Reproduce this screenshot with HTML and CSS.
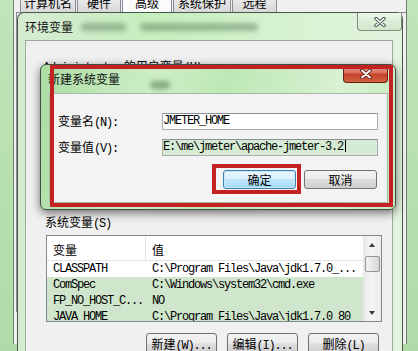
FILE: index.html
```html
<!DOCTYPE html>
<html lang="zh-CN">
<head>
    <meta charset="UTF-8">
    <meta name="viewport" content="width=device-width, initial-scale=1.0">
    <title>新建系统变量</title>
    <link rel="stylesheet" href="styles.css">
</head>
<body>
<div class="desk">

    <!-- Sistemska svojstva, u pozadini -->
    <div class="sys-window">
        <div class="sys-client">
            <div class="tabs">
                <span class="tab t1">计算机名</span>
                <span class="tab t2">硬件</span>
                <span class="tab t3 active">高级</span>
                <span class="tab t4">系统保护</span>
                <span class="tab t5">远程</span>
            </div>
            <div class="tab-panel"></div>
        </div>
    </div>

    <!-- Prozor: 环境变量 -->
    <div class="env-window">
        <div class="titlebar">
            <span class="title">环境变量</span>
            <span class="blob b1"></span>
            <span class="blob b2"></span>
            <span class="close">
                <svg width="12" height="10" viewBox="0 0 12 10">
                    <path d="M2 1.5 L10 8.5 M10 1.5 L2 8.5" stroke="#4a5a52" stroke-width="3.6" stroke-linecap="round"/>
                    <path d="M2 1.5 L10 8.5 M10 1.5 L2 8.5" stroke="#ffffff" stroke-width="1.6" stroke-linecap="round"/>
                </svg>
            </span>
        </div>
        <div class="env-client">
            <div class="group-label user-label"><span class="hw">Administrator</span> 的用户变量<span class="hw">(U)</span></div>
            <div class="user-list"></div>
            <div class="group-label">系统变量<span class="hw">(S)</span></div>

            <div class="list">
                <div class="list-body">
                    <div class="list-head">
                        <span class="col1">变量</span>
                        <span class="col2">值</span>
                    </div>
                    <div class="row">
                        <span class="col1 hw">CLASSPATH</span>
                        <span class="col2 hw">C:\Program Files\Java\jdk1.7.0_...</span>
                    </div>
                    <div class="row sel">
                        <span class="col1 hw">ComSpec</span>
                        <span class="col2 hw">C:\Windows\system32\cmd.exe</span>
                    </div>
                    <div class="row sel">
                        <span class="col1 hw">FP_NO_HOST_C...</span>
                        <span class="col2 hw">NO</span>
                    </div>
                    <div class="row sel">
                        <span class="col1 hw">JAVA_HOME</span>
                        <span class="col2 hw">C:\Program Files\Java\jdk1.7.0_80</span>
                    </div>
                </div>
                <div class="scrollbar">
                    <div class="sb-btn"><span class="arrow up"></span></div>
                    <div class="thumb"></div>
                    <div class="sb-track"></div>
                    <div class="sb-btn"><span class="arrow down"></span></div>
                </div>
            </div>

            <div class="env-buttons">
                <span class="btn wide">新建<span class="hw">(W)...</span></span>
                <span class="btn wide">编辑<span class="hw">(I)...</span></span>
                <span class="btn wide">删除<span class="hw">(L)</span></span>
            </div>
        </div>
    </div>

    <!-- Dijalog: 新建系统变量 -->
    <div class="dialog">
        <div class="titlebar dlg-titlebar">
            <span class="title">新建系统变量</span>
            <span class="blob b3"></span>
            <span class="close red">
                <svg width="12" height="10" viewBox="0 0 12 10">
                    <path d="M2 1.5 L10 8.5 M10 1.5 L2 8.5" stroke="#5a1a12" stroke-width="3.6" stroke-linecap="round"/>
                    <path d="M2 1.5 L10 8.5 M10 1.5 L2 8.5" stroke="#ffffff" stroke-width="1.8" stroke-linecap="round"/>
                </svg>
            </span>
        </div>
        <div class="dlg-client">
            <div class="field-row">
                <span class="field-label">变量名<span class="hw">(N):</span></span>
                <div class="field hw">JMETER_HOME</div>
            </div>
            <div class="field-row second">
                <span class="field-label">变量值<span class="hw">(V):</span></span>
                <div class="field active hw">E:\me\jmeter\apache-jmeter-3.2<span class="caret"></span></div>
            </div>
            <div class="dlg-buttons">
                <span class="btn default">确定</span>
                <span class="btn">取消</span>
            </div>
        </div>

        <!-- crvene oznake preko dijaloga -->
        <div class="mark mark-dialog"></div>
        <div class="mark mark-ok"></div>
    </div>

</div>
</body>
</html>
```

FILE: styles.css
```css
* {
    box-sizing: border-box;
}
body {
    margin: 0;
    width: 418px;
    height: 351px;
    overflow: hidden;
    font-family: "Noto Sans CJK SC", sans-serif;
    font-size: 12px;
    line-height: 14px;
    color: #000;
    background: linear-gradient(to bottom, #bfe5b8, #b0dba8);
}
.desk {
    position: relative;
    width: 418px;
    height: 351px;
    overflow: hidden;
}
.hw {
    font-family: "Liberation Mono", monospace;
    letter-spacing: -1.2px;
}

/* pozadinski prozor */
.sys-window {
    height: 100%;
    padding: 0 11px 0 13px;
}
.sys-client {
    height: 100%;
    background: #f0f0f0;
    border-left: 1px solid #6f7f70;
    border-right: 1px solid #6f7f70;
    padding-left: 2px;
}
.tabs {
    display: flex;
    margin-top: -7px;
    margin-left: 4px;
    height: 19px;
}
.tab {
    height: 19px;
    margin-right: 1px;
    border: 1px solid #898c95;
    border-bottom: none;
    background: linear-gradient(#f4f4f4, #e4e4e4 50%, #d8d8d8);
    text-align: center;
    line-height: 17px;
}
.tab.active {
    background: #fbfbfb;
    height: 20px;
}
.t1 { width: 56px; }
.t2 { width: 44px; }
.t3 { width: 50px; }
.t4 { width: 58px; }
.t5 { width: 45px; }
.tab-panel {
    height: 300px;
    border-top: 1px solid #898c95;
    border-left: 1px solid #898c95;
}

/* prozori */
.titlebar {
    display: flex;
    align-items: center;
    flex-shrink: 0;
}
.title {
    padding-left: 7px;
    color: #111;
}
.blob {
    display: block;
    height: 8px;
    border-radius: 4px;
    background: rgba(80, 115, 80, 0.45);
    filter: blur(2.5px);
}
.close {
    align-self: flex-start;
    display: flex;
    align-items: center;
    justify-content: center;
    width: 45px;
    height: 18px;
    margin-left: auto;
    border: 1px solid #7d8d80;
    border-top: none;
    border-radius: 0 0 4px 4px;
    background: linear-gradient(#eef8ec, #dcefd8 50%, #cfe8ca);
}

.env-window {
    position: absolute;
    left: 17px;
    top: 12px;
    width: 386px;
    height: 360px;
    display: flex;
    flex-direction: column;
    border: 1px solid #47574a;
    border-bottom: none;
    border-radius: 7px 7px 0 0;
    background: linear-gradient(to right, #d6ecd2, #c6eebe 35%, #d4f2ce 65%, #e2f3de);
}
.env-window .titlebar {
    height: 27px;
}
.b1 {
    width: 45px;
    margin-left: 8px;
}
.b2 {
    width: 118px;
    margin-left: 14px;
}
.env-client {
    flex: 1;
    margin: 0 9px 0 7px;
    background: #f0f0f0;
    border: 1px solid #9aaa9c;
    border-bottom: none;
    padding-left: 19px;
}
.group-label {
    height: 14px;
}
.user-label {
    margin-top: 18px;
    margin-left: -2px;
}
.user-list {
    height: 142px;
}
.list {
    display: flex;
    width: 336px;
    height: 87px;
    margin-top: 6px;
    margin-left: 1px;
    border: 1px solid #828790;
    background: #fff;
    overflow: hidden;
}
.list-body {
    flex: 1;
}
.list-head {
    display: flex;
    height: 25px;
    border-bottom: 1px solid #e2e2e2;
    align-items: center;
}
.list-head .col1 {
    border-right: 1px solid #e2e2e2;
    height: 100%;
    line-height: 27px;
}
.list-head .col2 {
    padding-top: 3px;
}
.col1 {
    width: 99px;
    padding-left: 6px;
    white-space: nowrap;
}
.col2 {
    padding-left: 6px;
    white-space: nowrap;
}
.row {
    display: flex;
    height: 16px;
    line-height: 16px;
}
.row.sel {
    background: #cfe6cc;
}
.scrollbar {
    width: 18px;
    display: flex;
    flex-direction: column;
    align-items: center;
    background: linear-gradient(to right, #e6e6e6, #f5f5f5 40%, #ececec);
}
.sb-btn {
    height: 17px;
    width: 18px;
    display: flex;
    align-items: center;
    justify-content: center;
}
.arrow {
    width: 0;
    height: 0;
    border-left: 3.5px solid transparent;
    border-right: 3.5px solid transparent;
}
.arrow.up {
    border-bottom: 4px solid #3c3c3c;
}
.arrow.down {
    border-top: 4px solid #3c3c3c;
}
.thumb {
    width: 15px;
    height: 16px;
    margin-top: 3px;
    border: 1px solid #959595;
    border-radius: 2px;
    background: linear-gradient(to right, #f4f4f4, #e4e4e4 50%, #d6d6d6);
}
.sb-track {
    flex: 1;
}
.env-buttons {
    display: flex;
    gap: 10px;
    margin-top: 11px;
    padding-left: 101px;
}

/* dugmad */
.btn {
    display: block;
    width: 73px;
    height: 19px;
    border: 1px solid #707070;
    border-radius: 3px;
    background: linear-gradient(#f3f3f3, #ebebeb 45%, #dddddd 50%, #cfcfcf);
    text-align: center;
    line-height: 17px;
}
.btn.wide {
    width: 71px;
    height: 22px;
    line-height: 20px;
}
.btn.default {
    border-color: #3c7fb1;
    background: linear-gradient(#eaf6fd, #d9f0fc 45%, #bee6fd 50%, #a7d9f5);
    box-shadow: inset 0 0 0 1px #c8e8fa;
}

/* dijalog */
.dialog {
    position: absolute;
    left: 40px;
    top: 64px;
    width: 356px;
    height: 146px;
    display: flex;
    flex-direction: column;
    border: 1px solid #3e4e40;
    border-radius: 6px;
    background: linear-gradient(100deg, #acdca4, #cdeec6 30%, #bde8b5 50%, #d8f1d3 80%, #c6eabe);
    box-shadow: 0 3px 10px rgba(0, 0, 0, 0.55);
}
.dlg-titlebar {
    height: 28px;
}
.b3 {
    width: 20px;
    margin-left: 30px;
    margin-top: 12px;
    background: rgba(60, 100, 60, 0.5);
}
.close.red {
    margin-right: 7px;
    border-color: #6b1d14;
    background: linear-gradient(#eaa898, #d8705c 45%, #c4422c 55%, #d0643e);
}
.dlg-client {
    flex: 1;
    margin: 0 7px 6px 8px;
    background: #f3f3f3;
    border: 1px solid #a8b8a8;
    padding: 19px 9px 0 8px;
}
.field-row {
    display: flex;
    align-items: center;
    height: 17px;
}
.field-row.second {
    margin-top: 9px;
}
.field-label {
    width: 104px;
}
.field {
    width: 216px;
    height: 17px;
    line-height: 15px;
    border: 1px solid #abadb3;
    border-top-color: #8e9096;
    background: #fff;
    white-space: nowrap;
}
.field.active {
    background: #d6ebd3;
}
.caret {
    display: inline-block;
    width: 1px;
    height: 12px;
    margin-left: 2px;
    vertical-align: -2px;
    background: #000;
}
.dlg-buttons {
    display: flex;
    justify-content: flex-end;
    gap: 8px;
    margin-top: 14px;
    margin-right: 1px;
}

/* crvene oznake */
.mark {
    position: absolute;
    border: 4px solid #c42222;
}
.mark-dialog {
    left: 9px;
    top: 0;
    width: 343px;
    height: 142px;
}
.mark-ok {
    left: 171px;
    top: 99px;
    width: 89px;
    height: 30px;
}
```
